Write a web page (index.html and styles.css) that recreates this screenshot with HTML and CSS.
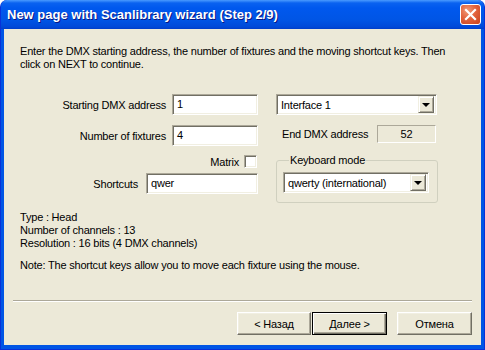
FILE: index.html
```html
<!DOCTYPE html>
<html lang="en">
<head>
    <meta charset="UTF-8">
    <meta name="viewport" content="width=device-width, initial-scale=1.0">
    <title>New page with Scanlibrary wizard</title>
    <link rel="stylesheet" href="styles.css">
</head>
<body>
    <div class="window">
        <div class="titlebar">
            <span class="title">New page with Scanlibrary wizard (Step 2/9)</span>
            <span class="close">
                <svg width="13" height="13" viewBox="0 0 13 13">
                    <path d="M2 2 L11 11 M11 2 L2 11" stroke="#fff" stroke-width="2.2" stroke-linecap="square"/>
                </svg>
            </span>
        </div>

        <div class="client">
            <p class="intro">Enter the DMX starting address, the number of fixtures and the moving shortcut keys. Then click on NEXT to continue.</p>

            <div class="form">
                <div class="col-left">
                    <div class="row row-start">
                        <span>Starting DMX address</span>
                        <div class="textbox tb-short">1</div>
                    </div>
                    <div class="row row-count">
                        <span>Number of fixtures</span>
                        <div class="textbox tb-short">4</div>
                    </div>
                    <div class="row row-matrix">
                        <span>Matrix</span>
                        <div class="checkbox"></div>
                    </div>
                    <div class="row row-keys">
                        <span>Shortcuts</span>
                        <div class="textbox tb-long">qwer</div>
                    </div>
                </div>

                <div class="col-right">
                    <div class="combo combo-iface">
                        <span class="combo-text">Interface 1</span>
                        <span class="combo-btn"><i class="arrow"></i></span>
                    </div>
                    <div class="end-row">
                        <span>End DMX address</span>
                        <div class="static">52</div>
                    </div>
                    <fieldset class="group">
                        <legend>Keyboard mode</legend>
                        <div class="combo combo-kbd">
                            <span class="combo-text">qwerty (international)</span>
                            <span class="combo-btn"><i class="arrow"></i></span>
                        </div>
                    </fieldset>
                </div>
            </div>

            <div class="info">
                <div>Type : Head</div>
                <div>Number of channels : 13</div>
                <div>Resolution : 16 bits (4 DMX channels)</div>
                <div class="note">Note: The shortcut keys allow you to move each fixture using the mouse.</div>
            </div>

            <div class="separator"></div>

            <div class="buttons">
                <button class="btn btn-back">&lt; Назад</button>
                <button class="btn btn-next">Далее &gt;</button>
                <button class="btn btn-cancel">Отмена</button>
            </div>
        </div>
    </div>
</body>
</html>
```

FILE: styles.css
```css
/* Basic reset */
* {
    margin: 0;
    padding: 0;
    box-sizing: border-box;
}

body {
    font-family: "Liberation Sans", Arial, sans-serif;
    font-size: 11px;
    letter-spacing: -0.2px;
    color: #000;
    background-color: #fff;
}

/* Window frame */
.window {
    width: 485px;
    height: 350px;
    display: flex;
    flex-direction: column;
    background-color: #0055e5;
    border: 1px solid #0831d9;
    border-top: none;
    border-radius: 7px 7px 0 0;
    overflow: hidden;
}

/* Title bar */
.titlebar {
    height: 29px;
    margin: 0 -1px;
    display: flex;
    align-items: center;
    justify-content: space-between;
    padding: 0 4px 0 7px;
    border-radius: 7px 7px 0 0;
    background: linear-gradient(#4a9bff 0, #0a62f0 3px, #0058ee 8px, #0055e5 20px, #0049d8 27px, #003dc8 29px);
}

.title {
    color: #fff;
    font-weight: bold;
    font-size: 13px;
    letter-spacing: 0;
    text-shadow: 1px 1px #0a1883;
    margin-top: -1px;
}

.close {
    width: 21px;
    height: 21px;
    margin-top: -1px;
    display: flex;
    align-items: center;
    justify-content: center;
    border: 1px solid #fff;
    border-radius: 3px;
    background: radial-gradient(circle at 35% 30%, #f09a78 0, #e2633d 45%, #c7401a 100%);
}

/* Client area */
.client {
    flex: 1;
    margin: 0 3px 4px 3px;
    background-color: #ece9d8;
    padding: 16px 9px 10px 16px;
    display: flex;
    flex-direction: column;
}

.intro {
    line-height: 13px;
    padding-right: 20px;
}

/* Form layout */
.form {
    display: flex;
    gap: 18px;
    margin-top: 23px;
    align-items: flex-start;
}

.col-left {
    width: 238px;
    display: flex;
    flex-direction: column;
    align-items: flex-end;
}

.row {
    display: flex;
    align-items: center;
    gap: 6px;
}

.row-count {
    margin-top: 10px;
}

.row-matrix {
    margin-top: 9px;
    gap: 5px;
    margin-right: 1px;
}

.row-keys {
    margin-top: 5px;
    gap: 8px;
}

.col-right {
    width: 162px;
    display: flex;
    flex-direction: column;
}

/* Sunken controls */
.textbox,
.combo,
.checkbox {
    background-color: #fff;
    border: 1px solid;
    border-color: #aca899 #fff #fff #aca899;
    box-shadow: inset 1px 1px #716f64, inset -1px -1px #f1efe2;
}

.textbox {
    height: 21px;
    line-height: 19px;
    padding-left: 4px;
}

.tb-short {
    width: 86px;
}

.tb-long {
    width: 112px;
}

.checkbox {
    width: 13px;
    height: 13px;
}

.combo {
    height: 21px;
    display: flex;
    align-items: center;
    justify-content: space-between;
    padding: 2px;
}

.combo-text {
    padding-left: 2px;
}

.combo-btn {
    width: 16px;
    height: 17px;
    display: flex;
    align-items: center;
    justify-content: center;
    background-color: #ece9d8;
    border: 1px solid;
    border-color: #f1efe2 #716f64 #716f64 #f1efe2;
    box-shadow: inset 1px 1px #fff, inset -1px -1px #aca899;
}

.arrow {
    width: 0;
    height: 0;
    border-left: 4px solid transparent;
    border-right: 4px solid transparent;
    border-top: 4px solid #000;
    margin-top: 1px;
}

.combo-iface {
    width: 161px;
}

/* End DMX address */
.end-row {
    display: flex;
    align-items: center;
    justify-content: space-between;
    margin-top: 10px;
    padding-left: 6px;
}

.static {
    width: 59px;
    height: 18px;
    line-height: 16px;
    text-align: center;
    border: 1px solid;
    border-color: #aca899 #fff #fff #aca899;
    margin-right: 2px;
}

/* Group box */
.group {
    margin-top: 11px;
    border: 1px solid #d0d0bf;
    border-radius: 3px;
    padding: 5px 0 9px 6px;
    width: 162px;
}

.group legend {
    padding: 0 1px;
    margin-left: 6px;
    line-height: 13px;
}

.combo-kbd {
    width: 146px;
}

/* Info text */
.info {
    margin-top: 8px;
    line-height: 13px;
}

.note {
    margin-top: 9px;
}

/* Footer */
.separator {
    margin-top: auto;
    margin-left: -7px;
    height: 2px;
    border-top: 1px solid #aca899;
    border-bottom: 1px solid #fff;
}

.buttons {
    display: flex;
    justify-content: flex-end;
    margin-top: 10px;
}

.btn {
    width: 75px;
    height: 23px;
    font-family: "Liberation Sans", Arial, sans-serif;
    font-size: 11px;
    letter-spacing: -0.2px;
    color: #000;
    background-color: #ece9d8;
    border: 1px solid;
    border-color: #fff #716f64 #716f64 #fff;
    box-shadow: inset -1px -1px #aca899, inset 1px 1px #f1efe2;
}

.btn-back {
    width: 74px;
    margin-right: 1px;
}

.btn-next {
    border: 1px solid #000;
    box-shadow: inset 1px 1px #fff, inset -1px -1px #716f64, inset -2px -2px #aca899;
    margin-right: 10px;
}
```
